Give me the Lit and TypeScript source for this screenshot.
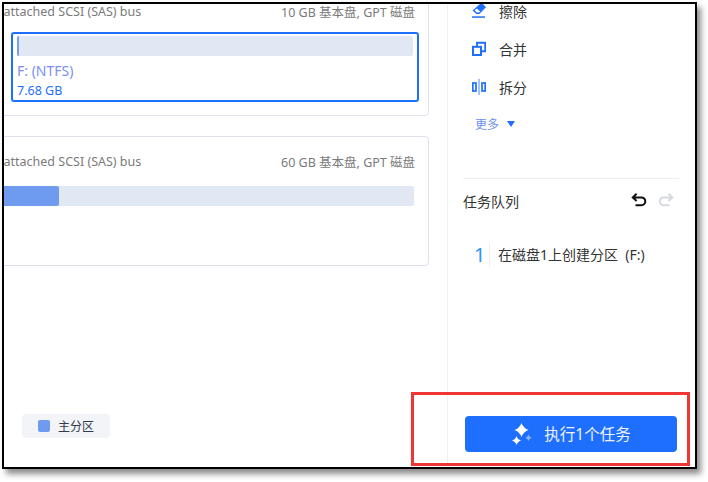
import { LitElement, html, css } from "lit";
import { customElement } from "lit/decorators.js";

@customElement("app-root")
export class AppRoot extends LitElement {
  static styles = css`
    :host { display: block; width: 708px; height: 482px; background: #fff; overflow: hidden;
      font-family: "Noto Sans", "Noto Sans CJK SC", sans-serif; }
    .frame { position: relative; box-sizing: border-box; width: 695px; height: 467px; margin: 2px 0 0 2px;
      border: 2px solid #000; background: #fff; display: flex; box-shadow: 4px 5px 6px rgba(0,0,0,.45); }
    .left { width: 443px; flex: none; overflow: hidden; display: flex; flex-direction: column; }
    .cards { display: flex; flex-direction: column; gap: 20px; margin: -18px 18px 0 -24px; }
    .card { box-sizing: border-box; height: 130px; border: 1px solid #dde2ee; border-radius: 4px; padding: 0 13px 0 0; }
    .head { height: 49px; padding-left: 22.5px; display: flex; justify-content: space-between; align-items: center;
      font-size: 12.5px; color: #7b7b7b; box-sizing: border-box; white-space: nowrap; }
    .sel { box-sizing: border-box; height: 70px; margin: -4px -4px 0 30px; border: 2px solid #1f6fff; border-radius: 3px; padding: 2px 4px; }
    .track { height: 20px; background: #e1e7f3; border-radius: 2px; display: flex; overflow: hidden; }
    .mark { width: 2px; background: #7a9fe8; }
    .fill { width: 64px; background: #6f9bee; border-radius: 0 2px 2px 0; }
    .plain { margin: 0 1px 0 14px; }
    .name { font-size: 14px; line-height: 20px; margin-top: 5px; color: #7d8ff2; }
    .size { font-size: 12.5px; line-height: 18px; margin-top: 1px; color: #1f6fff; }
    .legend { margin: auto 0 29px 18px; width: 88px; height: 24px; box-sizing: border-box; background: #f2f4f8; border-radius: 4px;
      display: flex; align-items: center; gap: 8px; padding-left: 16px; font-size: 12px; color: #2f3a4a; }
    .sq { width: 12px; height: 12px; border-radius: 2px; background: #6f9bee; }
    .side { flex: 1; min-width: 0; border-left: 1px solid #f0f0f0; overflow: hidden; box-sizing: border-box; padding: 0 16px 15px 15px;
      display: flex; flex-direction: column; }
    .actions { margin-top: -11px; }
    .row { height: 38px; padding-left: 9px; display: flex; align-items: center; gap: 13px; font-size: 14px; line-height: 14px; color: #333; }
    .row svg { width: 14px; height: 18px; flex: none; display: block; margin-top: -2px; }
    .more { height: 36px; margin-top: -1px; padding-left: 12px; display: flex; align-items: center; gap: 8px; font-size: 12px; color: #6f8ff0; }
    .caret { width: 0; height: 0; border-left: 4px solid transparent; border-right: 4px solid transparent; border-top: 6px solid #1f6fff; }
    .divider { height: 1px; background: #eeeeee; margin-top: 36px; }
    .qhead { height: 44px; display: flex; align-items: center; justify-content: space-between; font-size: 14px; color: #333; }
    .tools { display: flex; gap: 11px; padding-right: 5px; }
    .tools svg { width: 16px; height: 14px; display: block; margin-top: -2px; }
    .task { height: 24px; margin-top: 20px; display: flex; align-items: center; padding-left: 11px; font-size: 14px; color: #333; }
    .num { width: 15px; font-size: 20px; color: #2b95f5; line-height: 24px; }
    .task span.txt { border-left: 1px solid #eeeeee; padding-left: 8px; line-height: 24px; white-space: pre; }
    .go { margin: auto 2px 0; height: 36px; box-sizing: border-box; padding-bottom: 2px; border-radius: 4px; background: #1f6fff; color: #eef3ff; display: flex; align-items: center;
      justify-content: center; gap: 11px; font-size: 15.5px; }
    .go svg { width: 22px; height: 22px; display: block; margin-top: 2px; }
    .note { position: absolute; left: 407px; top: 388px; width: 279px; height: 74px; box-sizing: border-box; border: 3px solid #f03535; pointer-events: none; }
  `;

  render() {
    return html`
      <div class="frame">
        <div class="left">
          <div class="cards">
            <div class="card">
              <div class="head"><span>attached SCSI (SAS) bus</span><span>10 GB 基本盘, GPT 磁盘</span></div>
              <div class="sel">
                <div class="track"><div class="mark"></div></div>
                <div class="name">F: (NTFS)</div>
                <div class="size">7.68 GB</div>
              </div>
            </div>
            <div class="card">
              <div class="head"><span>attached SCSI (SAS) bus</span><span>60 GB 基本盘, GPT 磁盘</span></div>
              <div class="track plain"><div class="fill"></div></div>
            </div>
          </div>
          <div class="legend"><span class="sq"></span>主分区</div>
        </div>
        <div class="side">
          <div class="actions">
            <div class="row">
              <svg viewBox="0 0 14 18"><path d="M9.600 .6 14 5.200 7.300 12 4.300 12 .6 8.400Z" fill="#1f6fff"/><path d="M4.800 6.400 8.400 9.800 6.600 10.500H4.800L2.600 8.300Z" fill="#fff"/><rect x="0" y="14.300" width="13" height="1.500" fill="#1f6fff"/></svg>
              擦除
            </div>
            <div class="row">
              <svg viewBox="0 0 14 18"><path d="M5 7V2.800h8.200v8.400H9.200" fill="none" stroke="#1f6fff" stroke-width="1.900"/><rect x="1" y="6.800" width="8" height="8.200" fill="none" stroke="#1f6fff" stroke-width="2"/></svg>
              合并
            </div>
            <div class="row">
              <svg viewBox="0 0 14 18"><rect x=".8" y="5" width="3.200" height="8" fill="none" stroke="#1f6fff" stroke-width="1.700"/><rect x="10" y="5" width="3.200" height="8" fill="none" stroke="#1f6fff" stroke-width="1.700"/><rect x="6.200" y="1" width="1.600" height="16" fill="#8fb4f8"/></svg>
              拆分
            </div>
            <div class="more">更多<span class="caret"></span></div>
          </div>
          <div class="divider"></div>
          <div class="qhead">
            <span>任务队列</span>
            <span class="tools">
              <svg viewBox="0 0 16 14"><path d="M5.600 .8 1.800 4.400 5.600 8M2 4.400h8.400a3.900 3.900 0 0 1 0 7.800H4.500" fill="none" stroke="#111" stroke-width="2"/></svg>
              <svg viewBox="0 0 16 14"><path d="M10.400 .8 14.200 4.400 10.400 8M14 4.400H5.600a3.900 3.900 0 0 0 0 7.800H11.500" fill="none" stroke="#d5d9de" stroke-width="2"/></svg>
            </span>
          </div>
          <div class="task"><span class="num">1</span><span class="txt">在磁盘1上创建分区  (F:)</span></div>
          <div class="go">
            <svg viewBox="0 0 22 22"><path d="M10.500 0Q12.300 5.200 17.500 7 12.300 8.800 10.500 14 8.700 8.800 3.500 7 8.700 5.200 10.500 0Z" fill="#fff"/><path d="M5.500 13Q6.500 16.500 10 17.500 6.500 18.500 5.500 22 4.500 18.500 1 17.500 4.500 16.500 5.500 13Z" fill="#fff"/><path d="M17.500 11.500Q18.200 14 20.700 14.700 18.200 15.400 17.500 17.900 16.800 15.400 14.300 14.700 16.800 14 17.500 11.500Z" fill="#8fb6ff"/></svg>
            执行1个任务
          </div>
        </div>
        <div class="note"></div>
      </div>
    `;
  }
}
